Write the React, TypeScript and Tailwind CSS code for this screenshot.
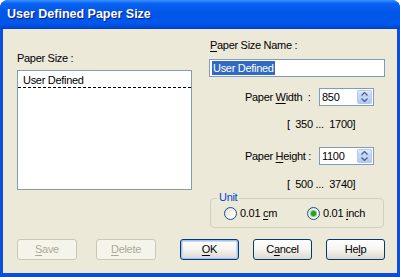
import React from "react";

const U = ({ children }: { children: React.ReactNode }) => (
  <span className="underline underline-offset-[2px] decoration-[1px]">{children}</span>
);

function Spin() {
  return (
    <div className="absolute right-[1px] top-[1px] bottom-[1px] w-[15px] flex flex-col">
      <div className="flex-1 rounded-t-[2px] bg-gradient-to-b from-[#E3EBFD] to-[#BCCEF8] border border-[#B4C8F6] border-b-0 flex items-end justify-center pb-[1px]">
        <svg width="7" height="4" viewBox="0 0 7 4">
          <path d="M0.5 3.5 L3.5 0.5 L6.5 3.5" fill="none" stroke="#4D6185" strokeWidth="1.3" />
        </svg>
      </div>
      <div className="flex-1 rounded-b-[2px] bg-gradient-to-b from-[#C9D8FA] to-[#B1C6F6] border border-[#B4C8F6] border-t-0 flex items-start justify-center pt-[1px]">
        <svg width="7" height="4" viewBox="0 0 7 4">
          <path d="M0.5 0.5 L3.5 3.5 L6.5 0.5" fill="none" stroke="#4D6185" strokeWidth="1.3" />
        </svg>
      </div>
    </div>
  );
}

function NumRow({ label, value }: { label: React.ReactNode; value: string }) {
  return (
    <div className="flex items-center h-[18px] pl-[36px]">
      <div className="w-[74px]">{label}</div>
      <div className="relative w-[55px] h-[18px] border border-[#7F9DB9] bg-white pl-[2px] flex items-center">
        {value}
        <Spin />
      </div>
    </div>
  );
}

function Radio({ checked }: { checked?: boolean }) {
  return (
    <div className="w-[13px] h-[13px] rounded-full border border-[#1C5180] bg-gradient-to-br from-[#DCDCD7] via-[#F4F4F0] to-white flex items-center justify-center">
      {checked && <div className="w-[5px] h-[5px] rounded-full bg-[#21A121] shadow-[0_0_0_1px_#7ACB7A]" />}
    </div>
  );
}

function Btn({
  children,
  disabled,
  def,
  className = "",
}: {
  children: React.ReactNode;
  disabled?: boolean;
  def?: boolean;
  className?: string;
}) {
  if (disabled) {
    return (
      <div
        className={`w-[60px] h-[21px] rounded-[3px] border border-[#C9C7BA] bg-[#F5F4EA] text-[#ACA899] flex items-center justify-center ${className}`}
      >
        {children}
      </div>
    );
  }
  return (
    <div
      className={`w-[59px] h-[21px] rounded-[3px] border border-[#003C74] bg-gradient-to-b from-white via-[#F5F4F0] to-[#DCD8CC] text-black flex items-center justify-center ${
        def ? "shadow-[inset_0_0_0_1px_#A6C0F0,inset_0_0_0_2px_#C9DBF8]" : ""
      } ${className}`}
    >
      {children}
    </div>
  );
}

export default function App() {
  return (
    <div className="w-[400px] h-[277px] flex flex-col rounded-t-[8px] overflow-hidden bg-[#0A4FD9] font-['Liberation_Sans',Arial,sans-serif] text-[11px] leading-[13px] text-black tracking-[-0.3px]">
      <div className="h-[29px] shrink-0 flex items-center pl-[7px] pb-[1px] bg-[linear-gradient(to_bottom,#3A93FF_0%,#0A62F2_12%,#0055E6_45%,#0058EC_80%,#0049DA_94%,#003CC4_100%)]">
        <span className="text-white font-bold text-[12.5px] tracking-normal [text-shadow:1px_1px_#0A1883]">
          User Defined Paper Size
        </span>
      </div>
      <div className="flex-1 mx-[3px] mb-[4px] bg-[#ECE9D8] flex flex-col pl-[14px] pr-[12px] pt-[10px]">
        <div className="flex gap-[17px]">
          {/* left column */}
          <div className="w-[175px] flex flex-col pt-[13px]">
            <div className="h-[13px]">Paper Size :</div>
            <div className="mt-[5px] h-[120px] border border-[#7F9DB9] bg-white">
              <div className="h-[17px] pl-[5px] pt-[3px] border-b border-dashed border-black">User Defined</div>
            </div>
          </div>
          {/* right column */}
          <div className="w-[176px] flex flex-col">
            <div className="h-[13px] pl-[1px]">
              <U>P</U>aper Size Name :
            </div>
            <div className="mt-[7px] h-[18px] border border-[#7F9DB9] bg-white flex items-center pl-[2px]">
              <span className="bg-[#316AC5] text-white px-[1px] leading-[14px]">User Defined</span>
            </div>
            <div className="mt-[11px]">
              <NumRow
                label={
                  <>
                    Paper <U>W</U>idth&nbsp; :
                  </>
                }
                value="850"
              />
            </div>
            <div className="mt-[12px] h-[13px] pl-[78px]">[&nbsp; 350 ...&nbsp; 1700]</div>
            <div className="mt-[16px]">
              <NumRow
                label={
                  <>
                    Paper <U>H</U>eight :
                  </>
                }
                value="1100"
              />
            </div>
            <div className="mt-[13px] h-[13px] pl-[78px]">[&nbsp; 500 ...&nbsp; 3740]</div>
            <div className="mt-[7px] relative ml-[1px] w-[174px] h-[30px] border border-[#D0D0BF] rounded-[4px] flex items-center pl-[13px] pt-[1px]">
              <span className="absolute -top-[8px] left-[6px] px-[2px] bg-[#ECE9D8] text-[#0046D5]">Unit</span>
              <div className="flex items-center gap-[3px] w-[83px]">
                <Radio />
                <span>
                  0.01 <U>c</U>m
                </span>
              </div>
              <div className="flex items-center gap-[3px]">
                <Radio checked />
                <span>
                  0.01 <U>i</U>nch
                </span>
              </div>
            </div>
          </div>
        </div>
        <div className="flex mt-[11px]">
          <Btn disabled>
            <span>
              <U>S</U>ave
            </span>
          </Btn>
          <Btn disabled className="ml-[19px]">
            <span>
              <U>D</U>elete
            </span>
          </Btn>
          <Btn def className="ml-[24px]">
            <span>
              <U>O</U>K
            </span>
          </Btn>
          <Btn className="ml-[14px]">
            <span>
              C<U>a</U>ncel
            </span>
          </Btn>
          <Btn className="ml-[14px]">
            <span>
              He<U>l</U>p
            </span>
          </Btn>
        </div>
      </div>
    </div>
  );
}
